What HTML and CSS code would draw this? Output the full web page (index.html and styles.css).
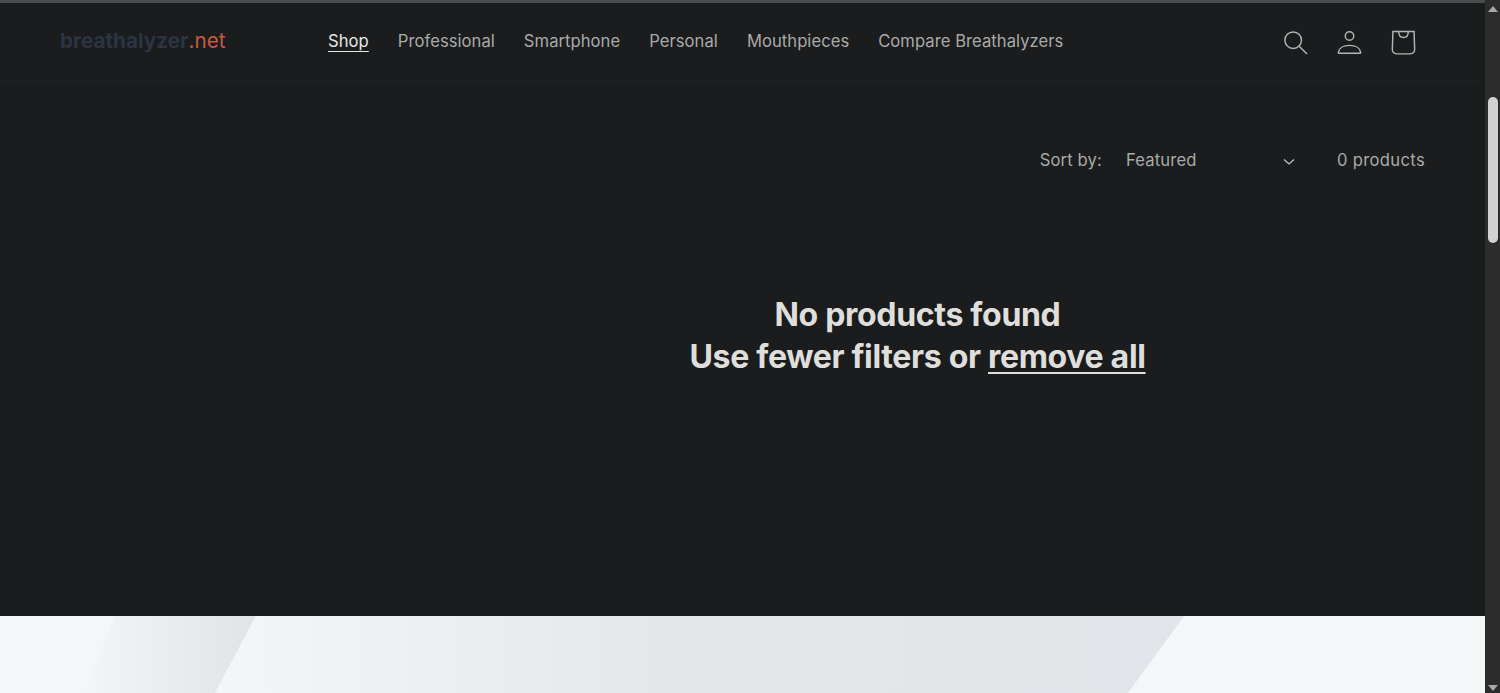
FILE: index.html
```html
<!DOCTYPE html>
<html lang="en">
<head>
<meta charset="utf-8">
<title>Shop - breathalyzer.net</title>
<link rel="stylesheet" href="styles.css">
</head>
<body>
<div class="window">
  <div class="page">
    <header class="header">
      <a class="logo" href="#"><span class="logo-dark">breathalyzer</span><span class="logo-red">.net</span></a>
      <nav class="nav">
        <a class="nav-link active" href="#">Shop</a>
        <a class="nav-link" href="#">Professional</a>
        <a class="nav-link" href="#">Smartphone</a>
        <a class="nav-link" href="#">Personal</a>
        <a class="nav-link" href="#">Mouthpieces</a>
        <a class="nav-link" href="#">Compare Breathalyzers</a>
      </nav>
      <div class="icons">
        <svg class="icon" viewBox="0 0 26 26" fill="none" stroke="currentColor" stroke-width="1.5"><circle cx="10.6" cy="10.6" r="8.6"/><path d="M16.8 16.8 25 25"/></svg>
        <svg class="icon" viewBox="0 0 26 26" fill="none" stroke="currentColor" stroke-width="1.5"><circle cx="13" cy="6.3" r="4.4"/><path d="M2.2 24.2h21.6c.6 0 .9-.4.8-1-.6-4.400-5.200-7.200-11.600-7.200S2 18.800 1.400 23.200c-.1.600.2 1 .8 1Z"/></svg>
        <svg class="icon" viewBox="0 0 26 26" fill="none" stroke="currentColor" stroke-width="1.5"><path d="M2 1.500h22l.6 18.500c.1 3-1.700 4.800-4.600 4.800H6c-2.900 0-4.700-1.800-4.600-4.800L2 1.500Z"/><path d="M8 1.500c0 4.200 2.200 6.300 5 6.300s5-2.100 5-6.300"/></svg>
      </div>
    </header>
    <main class="main">
      <div class="toolbar">
        <span class="sort-label">Sort by:</span>
        <div class="select">
          <span>Featured</span>
          <svg class="chevron" viewBox="0 0 12 8" fill="none" stroke="currentColor" stroke-width="1.3"><path d="m1 1.500 5 4.500 5-4.500"/></svg>
        </div>
        <span class="count">0 products</span>
      </div>
      <div class="empty">
        <p>No products found</p>
        <p>Use fewer filters or <a href="#">remove all</a></p>
      </div>
    </main>
    <section class="banner">
      <svg class="banner-art" viewBox="0 0 1485 77" preserveAspectRatio="none">
        <defs>
          <linearGradient id="g1" x1="0" x2="1" y1="0" y2="0"><stop offset="0" stop-color="#f3f5f6"/><stop offset="1" stop-color="#e0e4e8"/></linearGradient>
          <linearGradient id="g2" x1="0" x2="1" y1="0" y2="0"><stop offset="0" stop-color="#f4f6f8"/><stop offset="0.45" stop-color="#e5e8ea"/><stop offset="1" stop-color="#e1e5e9"/></linearGradient>
        </defs>
        <polygon points="115,0 256,0 215,77 84,77" fill="url(#g1)"/>
        <polygon points="256,0 1184,0 1128,77 215,77" fill="url(#g2)"/>
      </svg>
    </section>
  </div>
  <aside class="scrollbar">
    <span class="arrow up"></span>
    <div class="track"><div class="thumb"></div></div>
    <span class="arrow down"></span>
  </aside>
</div>
</body>
</html>
```

FILE: styles.css
```css
* { box-sizing: border-box; }
html, body { margin: 0; height: 100%; overflow: hidden; }
body { background: #1a1c1e; font-family: "Inter", "Liberation Sans", sans-serif; }
a { color: inherit; text-decoration: none; }

.window { display: flex; height: 693px; width: 1500px; }
.page { flex: 1; min-width: 0; display: flex; flex-direction: column; border-top: 3px solid #4a4b4c; }

.header { height: 79px; flex: none; display: flex; align-items: center; padding: 0 60px; border-bottom: 1px solid #202224; color: #aaaaa8; }
.logo { width: 268px; font-size: 20.7px; line-height: 24px; margin-top: -3px; }
.logo-dark { color: #2b3442; font-weight: 700; }
.logo-red { color: #c45a42; }
.nav { display: flex; gap: 29px; flex: 1; margin-top: -2px; }
.nav-link { font-size: 16.6px; line-height: 20px; letter-spacing: .05px; color: #aaaaa8; }
.nav-link.active { color: #e6e6e4; text-decoration: underline; text-underline-offset: 4px; text-decoration-thickness: 1px; }
.icons { display: flex; gap: 29px; margin-right: 9px; color: #b3b4b4; }
.icon { width: 25px; height: 25px; display: block; }

.main { flex: 1; display: flex; flex-direction: column; }
.toolbar { display: flex; align-items: center; height: 20px; margin-top: 68px; padding: 0 60px 0 0; justify-content: flex-end; font-size: 16.6px; letter-spacing: .15px; color: #aaaaa8; }
.count { letter-spacing: .33px; }
.sort-label { margin-right: 24px; }
.select { width: 169px; display: flex; align-items: center; justify-content: space-between; margin-right: 42px; }
.chevron { width: 12px; height: 8px; margin-top: 3px; color: #c2c3c3; }
.empty { margin: 124px 0 0 350px; text-align: center; color: #dfdedb; font-size: 32.1px; font-weight: 700; line-height: 42px; letter-spacing: -.35px; }
.empty p { margin: 0; }
.empty a { text-decoration: underline; text-underline-offset: 4px; text-decoration-thickness: 2px; }

.banner { height: 77px; flex: none; background: #f4f6f8; }
.banner-art { display: block; width: 100%; height: 100%; }

.scrollbar { width: 15px; flex: none; background: #2c2c2c; display: flex; flex-direction: column; align-items: center; }
.arrow { width: 0; height: 0; border-left: 5px solid transparent; border-right: 5px solid transparent; flex: none; }
.arrow.up { border-bottom: 6px solid #a8a8a8; margin-top: 6px; }
.arrow.down { border-top: 6px solid #a8a8a8; margin-bottom: 2px; }
.track { flex: 1; width: 100%; padding: 85px 2px 0 3px; }
.thumb { height: 146px; background: #d2d2d4; border-radius: 5px; }
```
